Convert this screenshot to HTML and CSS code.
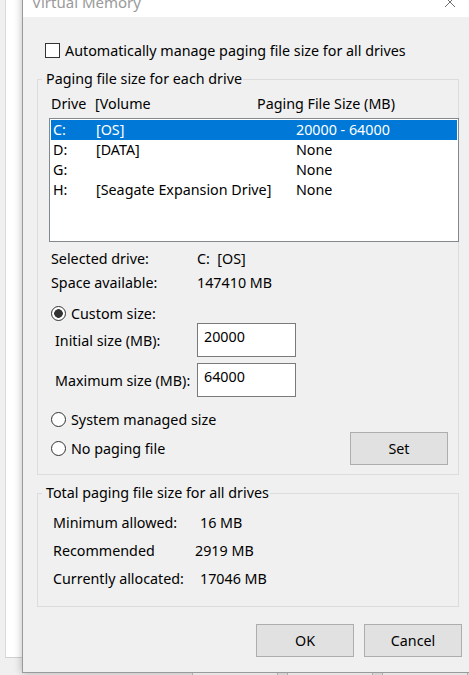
FILE: index.html
```html
<!DOCTYPE html>
<html lang="en">
  <head>
    <meta charset="UTF-8" />
    <meta name="viewport" content="width=device-width, initial-scale=1.0" />
    <title>Virtual Memory</title>
    <link rel="stylesheet" href="styles.css">
  </head>
  <body>
    <div class="screen">
      <div class="behind"></div>
      <div class="dialog">
        <div class="titlebar">
          <span class="title">Virtual Memory</span>
          <span class="close">
            <svg width="10" height="10" viewBox="0 0 10 10">
              <path d="M0 0 L10 10 M10 0 L0 10" stroke="#6e6e6e" stroke-width="1" fill="none" />
            </svg>
          </span>
        </div>
        <div class="client">
          <div class="check-row"><span class="checkbox"></span>Automatically manage paging file size for all drives</div>

          <fieldset class="group group-drives">
            <legend>Paging file size for each drive</legend>
            <div class="cols head"><span>Drive</span><span>[Volume</span><span>Paging File Size (MB)</span></div>
            <div class="listbox">
              <div class="cols item selected"><span>C:</span><span>[OS]</span><span>20000 - 64000</span></div>
              <div class="cols item"><span>D:</span><span>[DATA]</span><span>None</span></div>
              <div class="cols item"><span>G:</span><span></span><span>None</span></div>
              <div class="cols item"><span>H:</span><span>[Seagate Expansion Drive]</span><span>None</span></div>
            </div>
            <div class="info">
              <div class="info-row"><span>Selected drive:</span><span class="pre">C:  [OS]</span></div>
              <div class="info-row"><span>Space available:</span><span>147410 MB</span></div>
            </div>
            <div class="radio-row custom"><span class="radio checked"></span>Custom size:</div>
            <div class="size-row"><span class="size-label">Initial size (MB):</span><span class="input">20000</span></div>
            <div class="size-row max"><span class="size-label">Maximum size (MB):</span><span class="input">64000</span></div>
            <div class="radio-row system"><span class="radio"></span>System managed size</div>
            <div class="set-row">
              <div class="radio-row"><span class="radio"></span>No paging file</div>
              <button class="btn">Set</button>
            </div>
          </fieldset>

          <fieldset class="group group-total">
            <legend>Total paging file size for all drives</legend>
            <div class="totals">
              <div class="total-row"><span>Minimum allowed:</span><span>16 MB</span></div>
              <div class="total-row"><span>Recommended</span><span class="shift">2919 MB</span></div>
              <div class="total-row"><span>Currently allocated:</span><span>17046 MB</span></div>
            </div>
          </fieldset>

          <div class="buttons">
            <button class="btn">OK</button>
            <button class="btn">Cancel</button>
          </div>
        </div>
      </div>
    </div>
    <div class="strip"><span></span><span></span><span></span></div>
  </body>
</html>
```

FILE: styles.css
```css
body {
  margin: 0;
  width: 469px;
  height: 675px;
  overflow: hidden;
  background: #f0f0f0;
  font-family: "Noto Sans", "Open Sans", sans-serif;
  font-size: 14.3px;
  color: #000;
}
.screen {
  display: flex;
  align-items: flex-start;
  height: 673px;
}
.behind {
  flex: none;
  width: 16px;
  height: 657px;
  margin-left: 5px;
  background: #fff;
  border-left: 1px solid #dadada;
  border-bottom: 1px solid #d0d0d0;
}
.dialog {
  flex: none;
  box-sizing: border-box;
  width: 452px;
  height: 688px;
  margin-top: -15px;
  border: 1px solid #9a9a9a;
  background: #f0f0f0;
  box-shadow: 0 0 8px rgba(0, 0, 0, 0.28);
  display: flex;
  flex-direction: column;
}
.titlebar {
  display: flex;
  align-items: center;
  justify-content: space-between;
  height: 31px;
  background: #fff;
}
.title {
  padding-left: 9px;
  color: #9a9a9a;
  font-size: 15px;
}
.close {
  display: flex;
  align-items: center;
  justify-content: center;
  width: 46px;
  height: 31px;
}
.client {
  flex: 1;
  padding: 0 14px 15px 14px;
}
.check-row {
  display: flex;
  align-items: center;
  height: 20px;
  margin-top: 23px;
  padding-left: 8px;
}
.checkbox {
  box-sizing: border-box;
  width: 15px;
  height: 15px;
  margin-right: 5px;
  border: 1px solid #333;
  background: #fff;
}

/* group boxes */
.group {
  margin: 0;
  padding: 0;
  min-width: 0;
  border: 1px solid #dcdcdc;
}
.group legend {
  margin-left: 4px;
  padding: 0 1px 0 4px;
  line-height: 20px;
}
.group-drives {
  margin-top: 9px;
  padding-bottom: 9px;
}
.group-total {
  margin-top: 8px;
  padding-bottom: 13px;
}

.cols {
  display: grid;
  line-height: 20px;
  white-space: nowrap;
}
.head {
  margin-top: 5px;
  padding-left: 13px;
  grid-template-columns: 44px 162px auto;
}
.listbox {
  box-sizing: border-box;
  width: 410px;
  height: 124px;
  margin: 4px 0 0 11px;
  padding: 1px;
  border: 1px solid #828790;
  background: #fff;
}
.item {
  grid-template-columns: 43px 200px auto;
  padding-left: 2px;
}
.item.selected {
  background: #0078d7;
  color: #fff;
}

.info {
  margin-top: 5px;
  padding-left: 13px;
  line-height: 24px;
}
.info-row {
  display: grid;
  grid-template-columns: 146px auto;
}
.pre {
  white-space: pre;
}

.radio-row {
  display: flex;
  align-items: center;
  height: 20px;
  padding-left: 13px;
}
.radio {
  box-sizing: border-box;
  width: 15px;
  height: 15px;
  margin-right: 5px;
  border: 1px solid #333;
  border-radius: 50%;
  background: #fff;
}
.radio.checked {
  background: radial-gradient(circle, #333 0 4px, #fff 4.6px);
}
.custom {
  margin-top: 8px;
}
.system {
  margin-top: 12px;
}

.size-row {
  display: flex;
  align-items: flex-start;
  padding-left: 17px;
}
.size-row.max {
  margin-top: 6px;
}
.size-label {
  width: 142px;
  padding-top: 8px;
  line-height: 20px;
  white-space: nowrap;
}
.input {
  box-sizing: border-box;
  width: 99px;
  height: 34px;
  padding: 3px 6px;
  border: 1px solid #7a7a7a;
  background: #fff;
  line-height: 20px;
}

.set-row {
  display: flex;
  align-items: center;
  justify-content: space-between;
  margin-top: 3px;
}
.set-row .radio-row {
  padding-left: 13px;
}
.btn {
  box-sizing: border-box;
  width: 98px;
  height: 33px;
  padding: 0;
  border: 1px solid #adadad;
  background: #e1e1e1;
  font: inherit;
  color: #000;
}
.set-row .btn {
  margin-right: 10px;
}

.totals {
  margin-top: 6px;
}
.total-row {
  display: grid;
  grid-template-columns: 147px auto;
  padding-left: 15px;
  line-height: 28px;
}
.shift {
  margin-left: -5px;
}

.buttons {
  display: flex;
  justify-content: flex-end;
  gap: 10px;
  margin: 17px -3px 0 0;
}

.strip {
  display: flex;
  gap: 9px;
  height: 2px;
  padding-left: 192px;
}
.strip span {
  width: 84px;
  border-left: 1px solid #adadad;
  border-right: 1px solid #adadad;
  background: #e5e5e5;
}
```
